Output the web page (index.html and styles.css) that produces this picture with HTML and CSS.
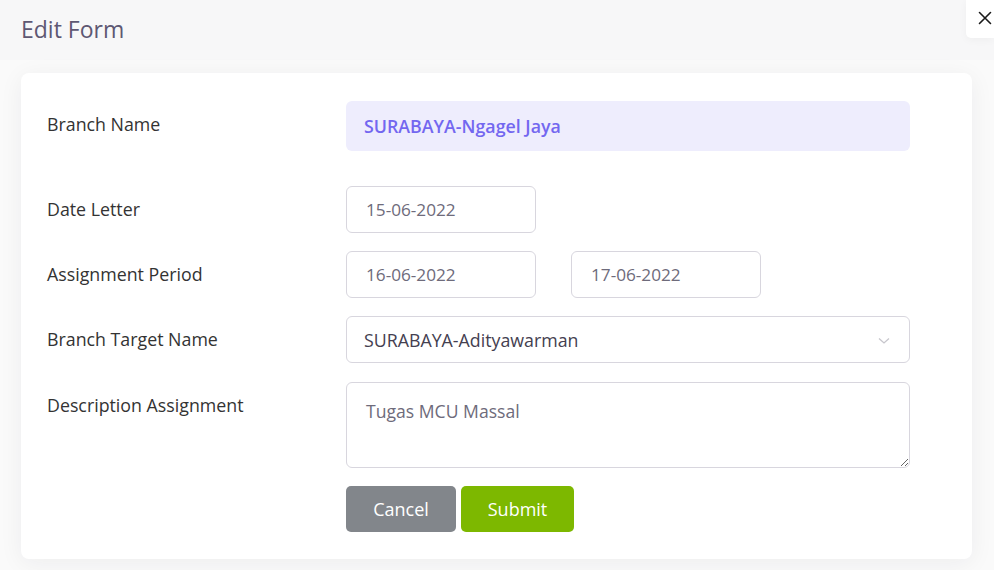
FILE: index.html
```html
<!DOCTYPE html>
<html>
<head>
<meta charset="utf-8">
<link rel="stylesheet" href="styles.css">
</head>
<body>
<div class="modal">
  <header class="modal-header">
    <h1 class="modal-title">Edit Form</h1>
    <button class="close-btn" aria-label="Close">
      <svg width="14" height="14" viewBox="0 0 14 14"><path d="M1.5 1.5 L12.5 12.5 M12.5 1.5 L1.5 12.5" stroke="#1a1a1a" stroke-width="1.6" fill="none" stroke-linecap="round"/></svg>
    </button>
  </header>
  <div class="modal-body">
    <form class="card">
      <div class="row row-branch">
        <label class="label">Branch Name</label>
        <div class="field readonly">SURABAYA-Ngagel Jaya</div>
      </div>
      <div class="row row-date">
        <label class="label">Date Letter</label>
        <input class="input small" value="15-06-2022">
      </div>
      <div class="row">
        <label class="label">Assignment Period</label>
        <div class="pair">
          <input class="input small" value="16-06-2022">
          <input class="input small" value="17-06-2022">
        </div>
      </div>
      <div class="row">
        <label class="label">Branch Target Name</label>
        <div class="select">
          <span>SURABAYA-Adityawarman</span>
          <svg class="chev" width="12" height="8" viewBox="0 0 12 8"><path d="M1 1.5 L6 6 L11 1.5" stroke="#c7c6cc" stroke-width="1.3" fill="none"/></svg>
        </div>
      </div>
      <div class="row row-desc">
        <label class="label">Description Assignment</label>
        <textarea class="textarea">Tugas MCU Massal</textarea>
      </div>
      <div class="row">
        <span class="label"></span>
        <div class="actions">
          <button type="button" class="btn btn-cancel">Cancel</button>
          <button type="button" class="btn btn-submit">Submit</button>
        </div>
      </div>
    </form>
  </div>
</div>
</body>
</html>
```
FILE: styles.css
```css
* { box-sizing: border-box; }
html, body { margin: 0; padding: 0; }
body {
  width: 994px;
  height: 570px;
  overflow: hidden;
  background: #f3f3f3;
  font-family: "Open Sans", "Liberation Sans", sans-serif;
}
.modal {
  width: 994px;
  height: 570px;
  background: #fafafa;
  display: flex;
  flex-direction: column;
}
.modal-header {
  height: 60px;
  background: #f7f7f8;
  display: flex;
  justify-content: space-between;
  align-items: flex-start;
  padding-left: 21px;
}
.modal-title {
  margin: 0;
  padding-top: 13px;
  font-size: 23px;
  font-weight: 400;
  line-height: 32px;
  color: #5e5873;
}
.close-btn {
  width: 28px;
  height: 38px;
  border: none;
  background: #fff;
  border-radius: 0 0 0 5px;
  padding: 0 0 2px 10px;
  display: flex;
  align-items: center;
  justify-content: center;
  box-shadow: 0 2px 8px rgba(0,0,0,0.04);
}
.modal-body {
  padding: 13px 22px 10px 21px;
  flex: 1;
}
.card {
  background: #fff;
  border-radius: 8px;
  box-shadow: 0 4px 24px rgba(34, 41, 47, 0.06);
  padding: 28px 26px 27px 26px;
  display: flex;
  flex-direction: column;
  gap: 18px;
}
.row {
  display: flex;
  align-items: flex-start;
}
.row-date { margin-top: 17px; }
.row-desc { margin-top: 1px; }
.label {
  width: 299px;
  flex: none;
  font-size: 17.8px;
  line-height: 24px;
  padding-top: 11px;
  color: #333;
}
.field.readonly {
  width: 564px;
  height: 50px;
  background: #eeedfd;
  border-radius: 6px;
  padding: 0 18px;
  display: flex;
  align-items: center;
  font-weight: 600;
  font-size: 17.8px;
  color: #7367f0;
}
.input, .select, .textarea {
  font-family: "Open Sans", "Liberation Sans", sans-serif;
  font-size: 17.2px;
  color: #6e6b7b;
  border: 1px solid #d8d6de;
  border-radius: 6px;
  background: #fff;
  outline: none;
}
.input.small {
  width: 190px;
  height: 47px;
  padding: 0 19px;
}
.pair {
  display: flex;
  gap: 35px;
}
.select {
  width: 564px;
  height: 47px;
  padding: 0 18px 0 17px;
  display: flex;
  align-items: center;
  justify-content: space-between;
  color: #444050;
  font-size: 17.8px;
}
.chev { margin-right: 1px; margin-top: 2px; }
.textarea {
  width: 564px;
  height: 86px;
  padding: 16px 19px;
  line-height: 24px;
  font-size: 17.6px;
  resize: vertical;
  display: block;
}
.actions {
  display: flex;
  gap: 5px;
}
.btn {
  height: 46px;
  border: none;
  border-radius: 5px;
  color: #fff;
  font-family: "Open Sans", "Liberation Sans", sans-serif;
  font-size: 18px;
  padding: 0;
}
.btn-cancel { width: 110px; background: #82868b; }
.btn-submit { width: 113px; background: #7db800; }
```
